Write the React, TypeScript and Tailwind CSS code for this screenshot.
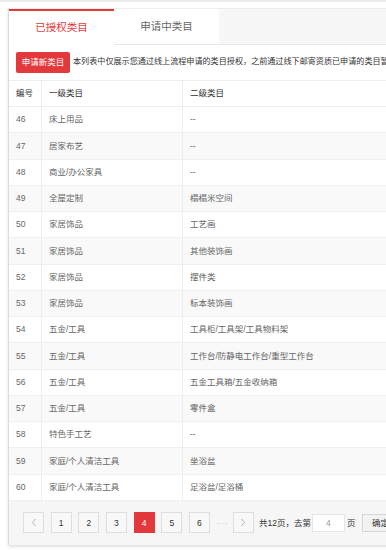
import React from "react"

// Row data for the authorised category table
interface CategoryRow {
  id: number
  level1: string
  level2: string
}

const rows: CategoryRow[] = [
  { id: 46, level1: "床上用品", level2: "--" },
  { id: 47, level1: "居家布艺", level2: "--" },
  { id: 48, level1: "商业/办公家具", level2: "--" },
  { id: 49, level1: "全屋定制", level2: "榻榻米空间" },
  { id: 50, level1: "家居饰品", level2: "工艺画" },
  { id: 51, level1: "家居饰品", level2: "其他装饰画" },
  { id: 52, level1: "家居饰品", level2: "摆件类" },
  { id: 53, level1: "家居饰品", level2: "标本装饰画" },
  { id: 54, level1: "五金/工具", level2: "工具柜/工具架/工具物料架" },
  { id: 55, level1: "五金/工具", level2: "工作台/防静电工作台/重型工作台" },
  { id: 56, level1: "五金/工具", level2: "五金工具箱/五金收纳箱" },
  { id: 57, level1: "五金/工具", level2: "零件盒" },
  { id: 58, level1: "特色手工艺", level2: "--" },
  { id: 59, level1: "家庭/个人清洁工具", level2: "坐浴盆" },
  { id: 60, level1: "家庭/个人清洁工具", level2: "足浴盆/足浴桶" },
]

const pages = ["1", "2", "3", "4", "5", "6"]

export default function App() {
  return (
    <div
      className="w-[386px] h-[550px] overflow-hidden bg-white"
      style={{ fontFamily: '"Liberation Sans", "Noto Sans CJK SC", sans-serif' }}
    >
      <div className="h-[2px] bg-[#ececec]" />
      <div className="ml-[8px] mt-[6px] w-[440px] border-l border-[#dcdcdc] shadow-[0_2px_3px_rgba(0,0,0,0.12)]">
        {/* tabs */}
        <div className="flex h-[37px] border-t border-[#ececec] border-b border-b-[#e6e6e6] bg-[#f7f7f7]">
          <div className="flex h-[36px] w-[105px] items-center justify-center border-t-2 border-[#e4393c] bg-white text-[10.5px] text-[#e4393c]">
            已授权类目
          </div>
          <div className="flex h-[35px] w-[105px] items-center justify-center bg-white pt-[1px] text-[10.5px] text-[#666]">
            申请中类目
          </div>
        </div>

        {/* toolbar */}
        <div className="flex h-[35px] items-center pl-[7px]">
          <button className="h-[21px] w-[54px] rounded-[2px] bg-[#e4393c] text-[8.5px] text-white">
            申请新类目
          </button>
          <span className="ml-[3px] whitespace-nowrap text-[8.1px] text-[#333]">
            本列表中仅展示您通过线上流程申请的类目授权，之前通过线下邮寄资质已申请的类目暂不显示
          </span>
        </div>

        {/* table */}
        <div className="border-t border-[#ededed] text-[8.5px]">
          <div className="grid h-[26px] grid-cols-[33px_141px_1fr] items-stretch border-b border-[#ededed] text-[#333]">
            <div className="flex items-center border-r border-[#ededed] pl-[7px]">编号</div>
            <div className="flex items-center border-r border-[#ededed] pl-[7px]">一级类目</div>
            <div className="flex items-center pl-[7px]">二级类目</div>
          </div>
          {rows.map((row, i) => (
            <div
              key={row.id}
              className={`grid h-[26.27px] grid-cols-[33px_141px_1fr] border-b border-[#f0f0f0] text-[#666] ${
                i % 2 === 1 ? "bg-[#f9f9f9]" : "bg-white"
              }`}
            >
              <div className="flex items-center border-r border-[#ededed] pl-[7px]">{row.id}</div>
              <div className="flex items-center border-r border-[#ededed] pl-[7px]">{row.level1}</div>
              <div className="flex items-center pl-[7px]">{row.level2}</div>
            </div>
          ))}
        </div>

        {/* pagination */}
        <div className="flex h-[44px] items-center bg-[#f6f6f6] pl-[14px] text-[8.5px] text-[#333]">
          <div className="flex h-[21px] w-[21px] items-center justify-center border border-[#dedede] bg-[#f8f8f8]">
            <svg width="6" height="9" viewBox="0 0 6 9" fill="none">
              <path d="M4.5 1L1.5 4.5L4.5 8" stroke="#aaa" strokeWidth="0.9" />
            </svg>
          </div>
          {pages.map((p) => (
            <div
              key={p}
              className={`ml-[6.67px] flex h-[21px] w-[21px] items-center justify-center border ${
                p === "4"
                  ? "border-[#e4393c] bg-[#e4393c] text-white"
                  : "border-[#dedede] bg-[#f8f8f8] text-[#333]"
              }`}
            >
              {p}
            </div>
          ))}
          <div className="ml-[6px] w-[14px] text-center tracking-[1px] text-[#bbb]">···</div>
          <div className="ml-[3px] flex h-[21px] w-[21px] items-center justify-center border border-[#dedede] bg-[#f8f8f8]">
            <svg width="6" height="9" viewBox="0 0 6 9" fill="none">
              <path d="M1.5 1L4.5 4.5L1.5 8" stroke="#aaa" strokeWidth="0.9" />
            </svg>
          </div>
          <span className="ml-[5px] whitespace-nowrap">共12页，去第</span>
          <div className="ml-[1px] flex h-[18px] w-[33px] items-center justify-center border border-[#e6e6e6] bg-white text-[#999]">
            4
          </div>
          <span className="ml-[2px]">页</span>
          <div className="ml-[7px] flex h-[18px] w-[36px] items-center justify-center border border-[#d6d6d6] bg-[#f2f2f2] text-[#333]">
            确定
          </div>
        </div>
      </div>
    </div>
  )
}
